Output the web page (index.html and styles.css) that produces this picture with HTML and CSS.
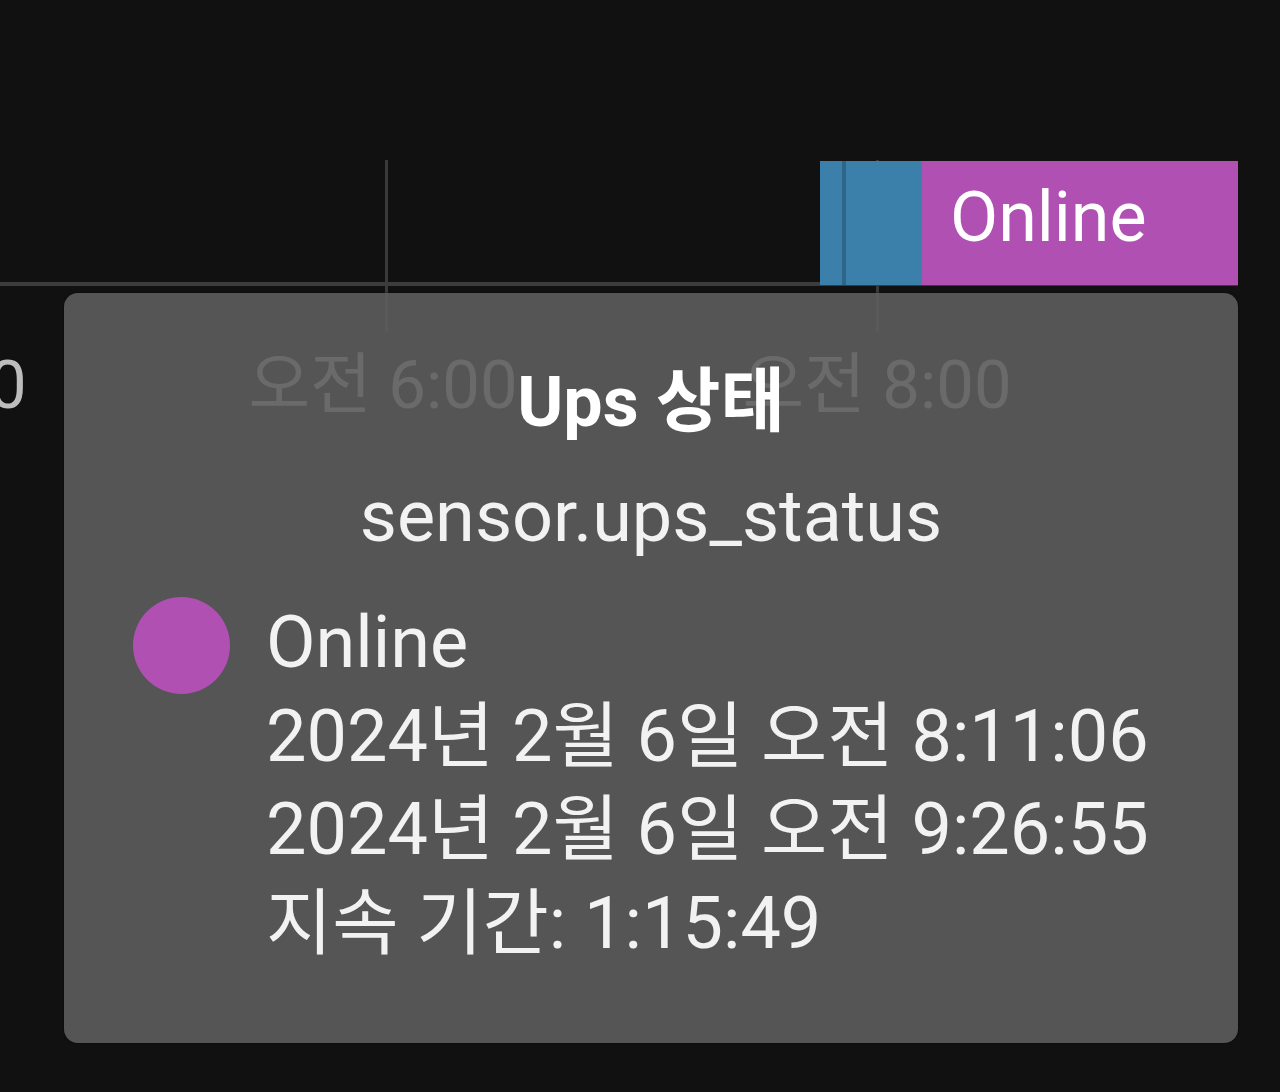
FILE: index.html
```html
<!DOCTYPE html>
<html lang="ko">
<head>
<meta charset="utf-8">
<title>Ups 상태</title>
<link rel="stylesheet" href="styles.css">
</head>
<body>
<div class="chart">
  <div class="grid grid-6"></div>
  <div class="grid grid-8"></div>
  <div class="axis"></div>
  <div class="bar">
    <div class="seg seg-blue seg-a"></div>
    <div class="seg seg-sep"></div>
    <div class="seg seg-blue seg-b"></div>
    <div class="seg seg-purple"><span class="bar-label">Online</span></div>
  </div>
  <div class="tick tick-4">오전 4:00</div>
  <div class="tick tick-6">오전 6:00</div>
  <div class="tick tick-8">오전 8:00</div>

  <div class="tooltip">
    <div class="tt-title">Ups 상태</div>
    <div class="tt-sub">sensor.ups_status</div>
    <div class="tt-body">
      <span class="swatch"></span>
      <div class="tt-lines">
        <div class="tt-line">Online</div>
        <div class="tt-line">2024년 2월 6일 오전 8:11:06</div>
        <div class="tt-line">2024년 2월 6일 오전 9:26:55</div>
        <div class="tt-line">지속 기간: 1:15:49</div>
      </div>
    </div>
  </div>
</div>
</body>
</html>
```

FILE: styles.css
```css
html, body {
  margin: 0;
  padding: 0;
  background: #111111;
}

body {
  width: 1280px;
  height: 1092px;
  overflow: hidden;
  font-family: Roboto, "Noto Sans CJK KR", sans-serif;
}

.chart {
  position: relative;
  width: 1280px;
  height: 1092px;
}

.grid {
  position: absolute;
  top: 160px;
  width: 3px;
  height: 172px;
  background: #3a3a3a;
}

.grid-6 { left: 385px; }
.grid-8 { left: 876px; }

.axis {
  position: absolute;
  left: 0;
  top: 282px;
  width: 1238px;
  height: 4px;
  background: #3c3c3c;
}

.bar {
  position: absolute;
  left: 820px;
  top: 161px;
  width: 418px;
  height: 124px;
  display: flex;
}

.seg { height: 100%; }
.seg-blue { background: #3a80ab; }
.seg-a { width: 22px; }
.seg-sep { width: 4px; background: #2e668a; }
.seg-b { width: 76px; }
.seg-purple {
  flex: 1;
  background: #b150b3;
  display: flex;
  align-items: center;
  padding-left: 28px;
}

.bar-label {
  color: #ffffff;
  font-size: 70px;
  line-height: 1;
  margin-top: -12px;
}

.tick {
  position: absolute;
  top: 340px;
  width: 320px;
  margin-left: -160px;
  text-align: center;
  font-size: 67px;
  line-height: 90px;
  color: #bdbdbd;
  white-space: nowrap;
}

.tick-4 { left: -108px; }
.tick-6 { left: 383px; }
.tick-8 { left: 877px; }

.tooltip {
  position: absolute;
  left: 64px;
  top: 293px;
  width: 1174px;
  height: 750px;
  box-sizing: border-box;
  padding: 64px 20px 0 69px;
  border-radius: 14px;
  background: rgba(95, 95, 95, 0.88);
  box-shadow: 0 0 2px rgba(0, 0, 0, 0.6);
  color: #ffffff;
  font-size: 72px;
  display: flex;
  flex-direction: column;
}

.tt-title {
  height: 90px;
  line-height: 90px;
  font-size: 70px;
  font-weight: 700;
  text-align: center;
  margin-left: -49px;
  white-space: nowrap;
}

.tt-sub {
  height: 90px;
  line-height: 90px;
  margin-top: 25px;
  text-align: center;
  margin-left: -49px;
  color: #f2f2f2;
  white-space: nowrap;
}

.tt-body {
  margin-top: 34px;
  display: flex;
  align-items: flex-start;
  gap: 36px;
}

.swatch {
  flex: none;
  width: 97px;
  height: 97px;
  margin-top: 1px;
  border-radius: 50%;
  background: #b150b3;
}

.tt-lines {
  display: flex;
  flex-direction: column;
}

.tt-line {
  height: 93.67px;
  line-height: 93.67px;
  color: #f2f2f2;
  white-space: nowrap;
}
```
